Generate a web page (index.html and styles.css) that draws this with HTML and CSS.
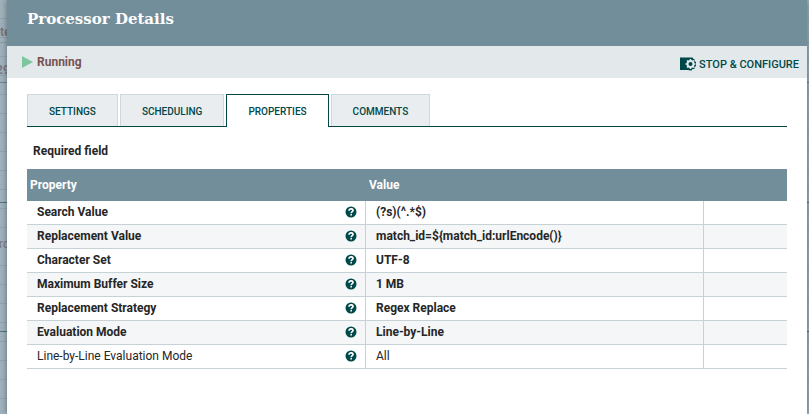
FILE: index.html
```
<!DOCTYPE html>
<html lang="en">
<head>
    <meta charset="UTF-8">
    <meta name="viewport" content="width=device-width, initial-scale=1.0">
    <title>Processor Details</title>
    <link rel="stylesheet" href="styles.css">
</head>
<body>
    <svg class="hidden" width="0" height="0" aria-hidden="true">
        <symbol id="help" viewBox="0 0 12 12">
            <circle cx="6" cy="6" r="5.5" fill="#004849"/>
            <path d="M4 4.700C4.100 3.500 4.900 2.900 6.100 2.900c1.200 0 1.900.6 1.900 1.500C8 5.700 6.200 5.600 6.200 7.200" fill="none" stroke="#fff" stroke-width="1.600"/>
            <path d="M5.400 8h1.600v1.500H5.400z" fill="#fff"/>
        </symbol>
    </svg>

    <!-- canvas showing behind the dialog -->
    <div class="canvas" aria-hidden="true">
        <div class="canvas-row stats-1">te</div>
        <div class="canvas-row stats-2">29</div>
        <div class="canvas-row group-edge"></div>
        <div class="canvas-row queued">rd</div>
        <div class="canvas-row group-edge lower"></div>
    </div>

    <main class="dialog">
        <header class="dialog-header">
            <h1>Processor Details</h1>
        </header>

        <div class="status-bar">
            <div class="status">
                <svg class="play" width="11" height="12" viewBox="0 0 11 12"><path d="M0 0l11 6-11 6z" fill="#7dc7a0"/></svg>
                <span>Running</span>
            </div>
            <button type="button" class="configure">
                <svg width="17" height="14" viewBox="0 0 17 14">
                    <path d="M0 .5h12.500l1 1.500h1v2l1.500 1v4l-1.500 1v2h-2l-1 1.500h-2l-1-.5H0z" fill="#004849"/>
                    <circle cx="10.500" cy="7" r="3" fill="none" stroke="#e3e8eb" stroke-width="2"/>
                    <path d="M10.500 2v2M10.500 10v2M5.500 7h2M13.500 7h2M7 3.500l1.400 1.400M12.600 9.100l1.400 1.400M14 3.500l-1.400 1.400M8.400 9.100L7 10.500" stroke="#e3e8eb" stroke-width="1.600"/>
                </svg>
                <span>STOP &amp; CONFIGURE</span>
            </button>
        </div>

        <div class="dialog-content">
            <div class="tabs" role="tablist">
                <button type="button" class="tab" role="tab">SETTINGS</button>
                <button type="button" class="tab" role="tab">SCHEDULING</button>
                <button type="button" class="tab selected" role="tab" aria-selected="true">PROPERTIES</button>
                <button type="button" class="tab" role="tab">COMMENTS</button>
            </div>

            <p class="required">Required field</p>

            <table class="properties">
                <colgroup>
                    <col class="col-name">
                    <col class="col-value">
                    <col class="col-actions">
                </colgroup>
                <thead>
                    <tr><th>Property</th><th>Value</th><th></th></tr>
                </thead>
                <tbody>
                    <tr>
                        <td><div class="name">Search Value <svg class="help"><use href="#help"/></svg></div></td>
                        <td>(?s)(^.*$)</td>
                        <td></td>
                    </tr>
                    <tr>
                        <td><div class="name">Replacement Value <svg class="help"><use href="#help"/></svg></div></td>
                        <td>match_id=${match_id:urlEncode()}</td>
                        <td></td>
                    </tr>
                    <tr>
                        <td><div class="name">Character Set <svg class="help"><use href="#help"/></svg></div></td>
                        <td>UTF-8</td>
                        <td></td>
                    </tr>
                    <tr>
                        <td><div class="name">Maximum Buffer Size <svg class="help"><use href="#help"/></svg></div></td>
                        <td>1 MB</td>
                        <td></td>
                    </tr>
                    <tr>
                        <td><div class="name">Replacement Strategy <svg class="help"><use href="#help"/></svg></div></td>
                        <td>Regex Replace</td>
                        <td></td>
                    </tr>
                    <tr>
                        <td><div class="name">Evaluation Mode <svg class="help"><use href="#help"/></svg></div></td>
                        <td>Line-by-Line</td>
                        <td></td>
                    </tr>
                    <tr class="optional">
                        <td><div class="name">Line-by-Line Evaluation Mode <svg class="help"><use href="#help"/></svg></div></td>
                        <td>All</td>
                        <td></td>
                    </tr>
                </tbody>
            </table>
        </div>
    </main>
</body>
</html>
```

FILE: styles.css
```
* {
    box-sizing: border-box;
}

body {
    margin: 0;
    padding: 0 2px 0 7px;
    min-height: 100vh;
    display: flex;
    position: relative;
    overflow: hidden;
    background-color: #9fb1bb;
    font-family: Roboto, sans-serif;
    font-size: 12px;
    color: #262626;
}

.hidden {
    position: absolute;
}

.canvas {
    position: absolute;
    inset: 0;
    background: repeating-linear-gradient(#9fb1bb 0, #9fb1bb 18px, #90a4af 18px, #90a4af 19px);
}

.canvas-row {
    position: absolute;
    left: 0;
    width: 100%;
    color: #7b7880;
    line-height: 19px;
}

.stats-1 {
    top: 23px;
    border-bottom: 1px solid #8a9ba6;
    font-weight: bold;
}

.stats-2 {
    top: 61px;
    height: 22px;
    border-bottom: 1px solid #71858f;
    font-weight: bold;
    text-indent: -4px;
}

.group-edge {
    top: 202px;
    border-top: 1px solid #4d7480;
}

.group-edge.lower {
    top: 331px;
}

.queued {
    top: 235px;
    text-indent: -1px;
}

.dialog {
    flex: 1;
    position: relative;
    background-color: #fff;
    box-shadow: 0 0 6px rgba(0, 0, 0, 0.4);
}

.dialog-header {
    height: 46px;
    padding: 7px 20px;
    background-color: #728e9b;
}

h1 {
    margin: 0;
    font-family: "Roboto Slab", "DejaVu Serif", serif;
    font-size: 15px;
    font-weight: bold;
    line-height: 24px;
    color: #fff;
}

.status-bar {
    display: flex;
    justify-content: space-between;
    align-items: center;
    height: 32px;
    padding: 0 8px 0 15px;
    background-color: #e3e8eb;
}

.status {
    display: flex;
    align-items: center;
    gap: 4px;
    padding-bottom: 1px;
    font-weight: bold;
    color: #775351;
}

button {
    font-family: inherit;
    font-weight: 500;
    color: #004849;
    cursor: pointer;
}

.configure {
    display: flex;
    align-items: center;
    gap: 2px;
    padding: 4px 0 0;
    border: none;
    background: none;
    font-size: 11px;
}

.dialog-content {
    padding: 16px 20px;
}

.tabs {
    display: flex;
    gap: 2px;
    border-bottom: 1px solid #004849;
}

.tab {
    height: 32px;
    padding: 2px 21px 0;
    border: 1px solid #ccdadb;
    border-bottom: none;
    background-color: #e9edf0;
    font-size: 10px;
}

.tab.selected {
    height: 33px;
    margin-bottom: -1px;
    padding-bottom: 1px;
    border-color: #004849;
    background-color: #fff;
}

.required {
    margin: 16px 0 10px 6px;
    font-weight: bold;
    line-height: 16px;
}

.properties {
    width: 100%;
    table-layout: fixed;
    border-collapse: separate;
    border-spacing: 0;
}

.col-name {
    width: 339px;
}

.col-value {
    width: 338px;
}

.properties th {
    height: 32px;
    padding: 0 3px;
    background-color: #728e9b;
    color: #fff;
    font-weight: bold;
    text-align: left;
}

.properties td {
    height: 24px;
    padding: 0 8px 2px 10px;
    border-right: 1px solid #c7d2d7;
    border-bottom: 1px solid #c7d2d7;
    font-weight: bold;
}

.properties td:last-child {
    border-right: none;
}

.properties tr:nth-child(even) td {
    background-color: #f4f6f7;
}

.properties .optional td {
    font-weight: normal;
}

.name {
    display: flex;
    justify-content: space-between;
    align-items: center;
}

.help {
    width: 12px;
    height: 12px;
}
```
